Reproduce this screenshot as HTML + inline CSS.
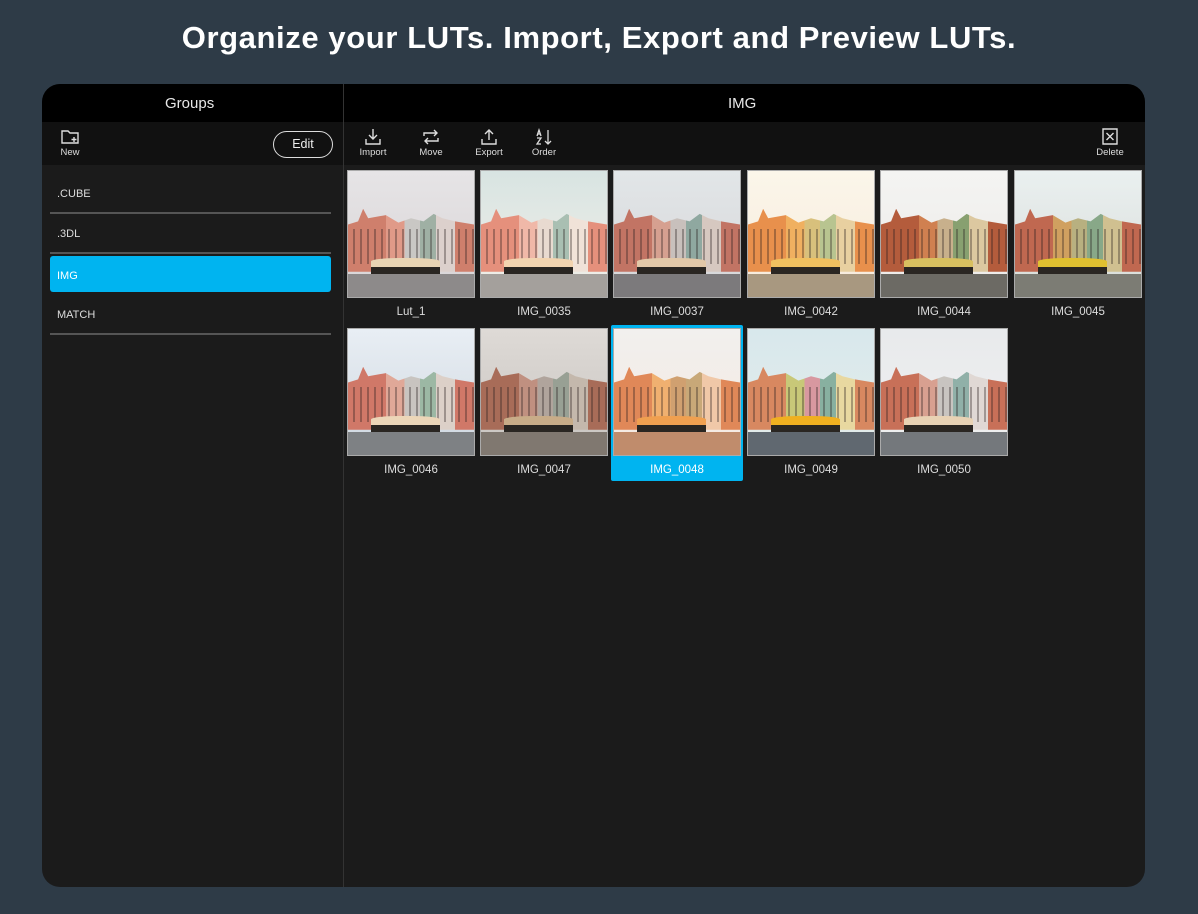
<!DOCTYPE html>
<html><head><meta charset="utf-8"><style>
*{margin:0;padding:0;box-sizing:border-box}
body{width:1198px;height:914px;background:#2e3b47;font-family:"Liberation Sans",sans-serif;position:relative;overflow:hidden;color:#fff}
h1{position:absolute;top:20px;left:0;width:1198px;text-align:center;font-size:31px;font-weight:bold;letter-spacing:0.6px;color:#fff}
.panel{position:absolute;left:42px;top:84px;width:1103px;height:803px;border-radius:18px;background:#1b1b1b;overflow:hidden}
.hdr{position:absolute;left:0;top:0;width:1103px;height:38px;background:#000}
.hdr span{position:absolute;top:11px;font-size:15px;color:#e8e8e8}
.div{position:absolute;left:301px;top:0;width:1px;height:803px;background:#333}
.tb{position:absolute;top:38px;height:43px;background:#111}
.ic{position:absolute;top:44px;text-align:center;font-size:9.5px;color:#ddd;width:50px}
.ic svg{display:block;margin:0 auto 1px}
.edit{position:absolute;left:231px;top:47px;width:60px;height:27px;border:1.5px solid #ddd;border-radius:14px;font-size:12.5px;text-align:center;line-height:24px;color:#eee}
.li{position:absolute;left:8px;width:281px;height:40px;font-size:11px;color:#ddd;padding:20px 0 0 7px;line-height:0;border-bottom:2px solid #555}
.li.sel{background:#00b4f0;border-radius:3px;border-bottom:none;height:36px;color:#fff}
.th{position:absolute;width:128px;height:128px;border:1px solid #aaa;overflow:hidden}
.th .sky{position:absolute;left:0;top:0;width:100%;height:100%;background:linear-gradient(var(--sky1),var(--sky2))}
.th .bld{position:absolute;left:0;top:30%;width:100%;height:50%;background:linear-gradient(90deg,var(--a) 0 30%,var(--b) 30% 45%,var(--c) 45% 57%,var(--d) 57% 70%,var(--e) 70% 85%,var(--a) 85% 100%);clip-path:polygon(0 25%,8% 20%,12% 0,16% 15%,30% 10%,40% 22%,50% 15%,60% 20%,68% 8%,75% 15%,85% 20%,100% 25%,100% 100%,0 100%)}
.th .win{position:absolute;left:0;top:46%;width:100%;height:28%;background:repeating-linear-gradient(90deg,transparent 0 5px,rgba(40,30,30,.35) 5px 7px);}
.th .umb{position:absolute;left:18%;top:69%;width:55%;height:7%;background:var(--u);border-radius:40% 40% 0 0}
.th .und{position:absolute;left:18%;top:76%;width:55%;height:8%;background:#2a2622}
.th .gnd{position:absolute;left:0;top:82%;width:100%;height:18%;background:var(--g)}
.lb{position:absolute;width:128px;text-align:center;font-size:11.5px;color:#ddd}
</style></head><body>
<h1>Organize your LUTs. Import, Export and Preview LUTs.</h1>
<div class="panel">
<div class="hdr"><span style="left:123px">Groups</span><span style="left:686px">IMG</span></div>
<div class="tb" style="left:0;width:301px"></div>
<div class="tb" style="left:302px;width:801px"></div>
<div class="div"></div>
<div class="ic" style="left:3px"><svg width="20" height="18" viewBox="0 0 20 18" fill="none" stroke="#ddd" stroke-width="1.4"><path d="M2 3h6l2 2h8v10H2z"/><path d="M14 9v5M11.5 11.5h5"/></svg>New</div>
<div class="edit">Edit</div>
<div class="ic" style="left:306px"><svg width="20" height="18" viewBox="0 0 20 18" fill="none" stroke="#ddd" stroke-width="1.4"><path d="M10 1v10M6 7l4 4 4-4M3 11v5h14v-5"/></svg>Import</div>
<div class="ic" style="left:364px"><svg width="20" height="18" viewBox="0 0 20 18" fill="none" stroke="#ddd" stroke-width="1.4"><path d="M3 8V5h13M13 2l3 3-3 3M17 10v3H4M7 16l-3-3 3-3"/></svg>Move</div>
<div class="ic" style="left:422px"><svg width="20" height="18" viewBox="0 0 20 18" fill="none" stroke="#ddd" stroke-width="1.4"><path d="M10 12V2M6 6l4-4 4 4M3 11v5h14v-5"/></svg>Export</div>
<div class="ic" style="left:477px"><svg width="20" height="18" viewBox="0 0 20 18" fill="none" stroke="#ddd" stroke-width="1.3"><path d="M3 8l2-6 2 6M4 6h2M3 10h4l-4 6h4M14 2v14M11 13l3 3 3-3"/></svg>Order</div>
<div class="ic" style="left:1043px"><svg width="20" height="18" viewBox="0 0 20 18" fill="none" stroke="#ddd" stroke-width="1.4"><path d="M3 1h14v15H3zM6.5 5l7 7M13.5 5l-7 7"/></svg>Delete</div>
<div class="li" style="top:90px">.CUBE</div>
<div class="li" style="top:130px">.3DL</div>
<div class="li sel" style="top:172px">IMG</div>
<div class="li" style="top:211px;height:40px">MATCH</div>
<div style="position:absolute;left:569px;top:241px;width:132px;height:156px;background:#00b4f0;border-radius:2px"></div>
</div>
<div id="g"></div>
<script>
const items=[
["Lut_1",347,170,"#e6e4e6","#d8d4d6","#cf7f6c","#e09a88","#c9c7c4","#9fb0a4","#dcd0cc","#e8d4b4","#8d8a8a"],
["IMG_0035",480,170,"#d8e4e2","#f2efe8","#e5907c","#f0b8a8","#e8dad0","#a9bfb2","#f0e2d8","#f2d4b0","#a4a09c"],
["IMG_0037",613,170,"#e2e6e8","#d6d6d8","#c27464","#d6a090","#c8c0bc","#8fa8a0","#d6c8c0","#e2c8a8","#7c7a7c"],
["IMG_0042",747,170,"#fbf6ea","#f6eadb","#e8904c","#f0b060","#d8c07c","#b8c490","#e8d0a0","#f0c060","#a89880"],
["IMG_0044",880,170,"#f4f4f2","#eceae8","#b45c3c","#d08050","#c8b08c","#88a070","#dcc8a0","#d8c060","#6c6a64"],
["IMG_0045",1014,170,"#eaf0f0","#d8dcd8","#c06850","#d0a060","#b8b080","#88a888","#d0c090","#e0c030","#7c7c74"],
["IMG_0046",347,328,"#e8eef4","#d0d8e0","#d07868","#e0a898","#c8c4c0","#9cb8a4","#dcd0c8","#ecd6b8","#7e8184"],
["IMG_0047",480,328,"#dedad6","#c8c4c0","#a86c58","#c09080","#b0a49c","#98a094","#c4b8ac","#c8ac88","#807870"],
["IMG_0048",613,328,"#f2f0ee","#f4e8e0","#e08858","#f0b070","#d0a070","#c8a878","#f0c8a8","#f0a050","#c08c6c"],
["IMG_0049",747,328,"#d8e8ec","#e4ecea","#d88860","#c8c878","#d898a0","#88b0a0","#e8d8a0","#f0b020","#606870"],
["IMG_0050",880,328,"#e8eaec","#f0f0f0","#c87058","#d8a090","#c8c4c0","#90b0a8","#e0d8d4","#e8d2b4","#74787c"]];
let h="";
for(const [n,x,y,s1,s2,a,b,c,d,e,u,g] of items){
h+=`<div class="th" style="left:${x}px;top:${y}px;--sky1:${s1};--sky2:${s2};--a:${a};--b:${b};--c:${c};--d:${d};--e:${e};--u:${u};--g:${g}"><div class="sky"></div><div class="bld"></div><div class="win"></div><div class="umb"></div><div class="und"></div><div class="gnd"></div></div><div class="lb" style="left:${x}px;top:${y+136}px${n=="IMG_0048"?";color:#fff":""}">${n}</div>`;}
document.getElementById("g").innerHTML=h;
</script>
</body></html>
